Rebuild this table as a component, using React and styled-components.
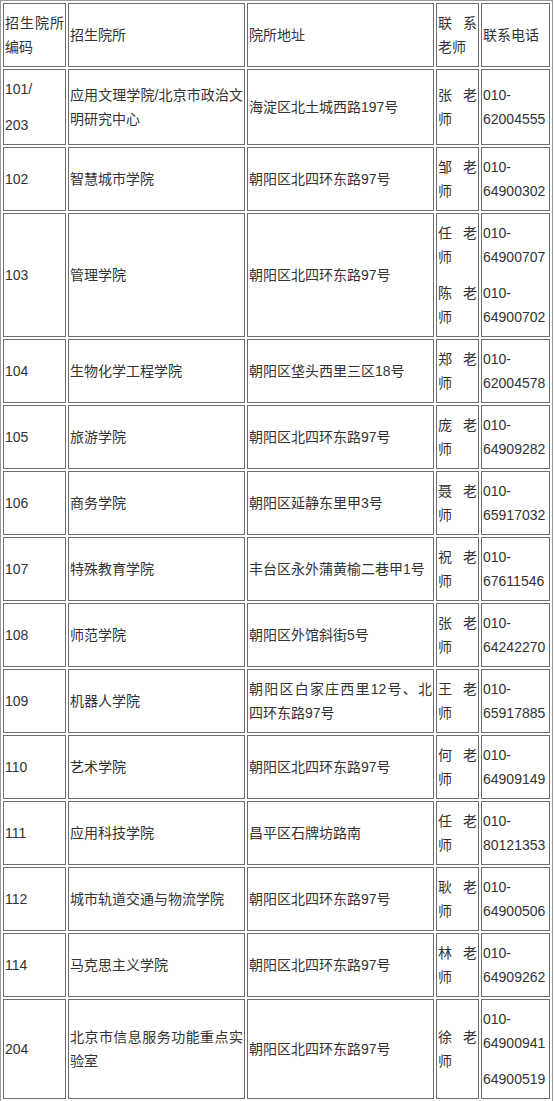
import React from "react";
import styled, { createGlobalStyle } from "styled-components";

const Global = createGlobalStyle`
  html, body { margin: 0; padding: 0; background: #fff; }
  body {
    font-family: "Liberation Sans", Arial, "Noto Sans CJK SC", sans-serif;
    font-size: 14px;
    color: #333;
  }
`;

const Table = styled.table`
  width: 553px;
  table-layout: fixed;
  border-collapse: separate;
  border-spacing: 2px;
  border: 1px solid #9a9a9a;
`;

const Col = styled.col`
  width: ${(p) => p.$w}px;
`;

const Cell = styled.td`
  border: 1px solid #6e6e6e;
  padding: 7px 1px;
  line-height: 24px;
  vertical-align: middle;
  text-align: justify;
  word-break: normal;
`;

const Para = styled.p`
  margin: 0;
  & + & { margin-top: 12px; }
`;

const cols = [63, 177, 187, 43, 69];

const rows = [
  [["招生院所编码"], ["招生院所"], ["院所地址"], ["联系老师"], ["联系电话"]],
  [["101/", "203"], ["应用文理学院/北京市政治文明研究中心"], ["海淀区北土城西路197号"], ["张老师"], ["010-62004555"]],
  [["102"], ["智慧城市学院"], ["朝阳区北四环东路97号"], ["邹老师"], ["010-64900302"]],
  [["103"], ["管理学院"], ["朝阳区北四环东路97号"], ["任老师", "陈老师"], ["010-64900707", "010-64900702"]],
  [["104"], ["生物化学工程学院"], ["朝阳区垡头西里三区18号"], ["郑老师"], ["010-62004578"]],
  [["105"], ["旅游学院"], ["朝阳区北四环东路97号"], ["庞老师"], ["010-64909282"]],
  [["106"], ["商务学院"], ["朝阳区延静东里甲3号"], ["聂老师"], ["010-65917032"]],
  [["107"], ["特殊教育学院"], ["丰台区永外蒲黄榆二巷甲1号"], ["祝老师"], ["010-67611546"]],
  [["108"], ["师范学院"], ["朝阳区外馆斜街5号"], ["张老师"], ["010-64242270"]],
  [["109"], ["机器人学院"], ["朝阳区白家庄西里12号、北四环东路97号"], ["王老师"], ["010-65917885"]],
  [["110"], ["艺术学院"], ["朝阳区北四环东路97号"], ["何老师"], ["010-64909149"]],
  [["111"], ["应用科技学院"], ["昌平区石牌坊路南"], ["任老师"], ["010-80121353"]],
  [["112"], ["城市轨道交通与物流学院"], ["朝阳区北四环东路97号"], ["耿老师"], ["010-64900506"]],
  [["114"], ["马克思主义学院"], ["朝阳区北四环东路97号"], ["林老师"], ["010-64909262"]],
  [["204"], ["北京市信息服务功能重点实验室"], ["朝阳区北四环东路97号"], ["徐老师"], ["010-64900941", "64900519"]],
];

export default function App() {
  return (
    <>
      <Global />
      <Table>
        <colgroup>
          {cols.map((w, i) => (
            <Col key={i} $w={w} />
          ))}
        </colgroup>
        <tbody>
          {rows.map((r, i) => (
            <tr key={i}>
              {r.map((c, j) => (
                <Cell key={j}>
                  {c.map((t, k) => (
                    <Para key={k}>{t}</Para>
                  ))}
                </Cell>
              ))}
            </tr>
          ))}
        </tbody>
      </Table>
    </>
  );
}
